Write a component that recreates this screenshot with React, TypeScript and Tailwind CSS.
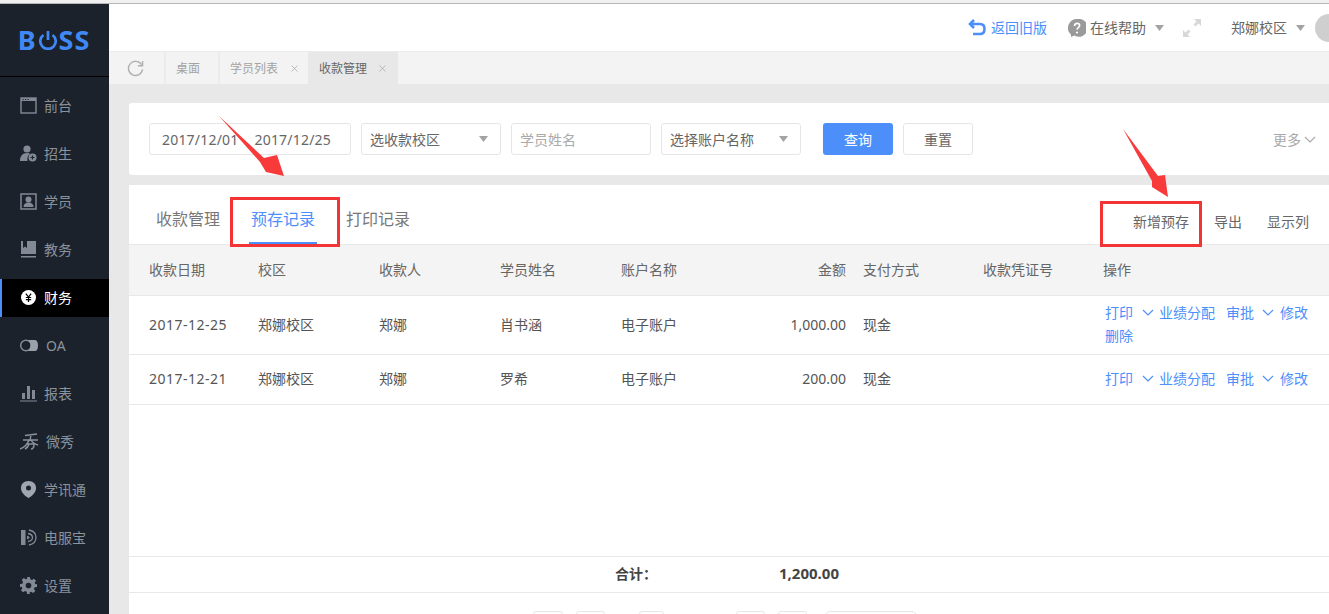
import React from 'react';
import { X } from 'lucide-react';

const Caret = () => (
  <svg width="9" height="6" viewBox="0 0 9 6" className="shrink-0">
    <path d="M0 0h9L4.500 6z" fill="#a3a3a3" />
  </svg>
);

const Chevron = ({ className }: { className?: string }) => (
  <svg viewBox="0 0 12 7" className={`w-[12px] h-[7px] shrink-0 ${className ?? ''}`} fill="none" stroke="currentColor" strokeWidth="1.200">
    <path d="M1 1l5 5 5-5" />
  </svg>
);

const ic = 'w-[17px] h-[17px] shrink-0';
const col = '#828a96';

const navItems: { label: string; icon: React.ReactNode; gap?: string; active?: boolean }[] = [
  {
    label: '前台',
    icon: (
      <svg viewBox="0 0 17 17" className={ic}>
        <rect x="1" y="1" width="15" height="15" fill="none" stroke={col} strokeWidth="1.400" />
        <path d="M1 1h15v3H1z" fill={col} />
        <path d="M2.500 2h1.200v1H2.500zM5 2h1.200v1H5zM7.500 2h1.200v1H7.500z" fill="#1c222c" />
      </svg>
    ),
  },
  {
    label: '招生',
    icon: (
      <svg viewBox="0 0 17 17" className={ic}>
        <circle cx="7" cy="4" r="3.600" fill={col} />
        <path d="M0 16c0-5 2.500-8 7-8 1.500 0 2.500.3 3 1-2 1-3 3-2.500 7z" fill={col} />
        <circle cx="12.500" cy="12.500" r="4" fill={col} />
        <path d="M10.500 12.500h4M12.500 10.500v4" stroke="#1c222c" strokeWidth="1.100" />
      </svg>
    ),
  },
  {
    label: '学员',
    icon: (
      <svg viewBox="0 0 17 17" className={ic}>
        <rect x="1" y="1" width="15" height="15" fill="none" stroke={col} strokeWidth="1.500" />
        <circle cx="8.500" cy="6.500" r="3" fill={col} />
        <path d="M3.500 14c0-3 2-4.500 5-4.500s5 1.500 5 4.500z" fill={col} />
      </svg>
    ),
  },
  {
    label: '教务',
    icon: (
      <svg viewBox="0 0 17 17" className={ic}>
        <path d="M1 0h15v13H1z" fill={col} />
        <path d="M3 0h4v7L5 5.500 3 7z" fill="#1c222c" />
        <path d="M1 15h15v1.500H1z" fill={col} />
      </svg>
    ),
  },
  {
    label: '财务',
    active: true,
    icon: (
      <svg viewBox="0 0 17 17" className="w-[15px] h-[15px] shrink-0 mx-px">
        <circle cx="8.500" cy="8.500" r="8.500" fill="#fff" />
        <path d="M5.500 4l3 4 3-4M8.500 8v5.500M5.500 8.500h6M5.500 11h6" stroke="#000" strokeWidth="1.400" fill="none" />
      </svg>
    ),
  },
  {
    label: 'OA',
    gap: 'ml-[8px]',
    icon: (
      <svg viewBox="0 0 18 13" className="w-[18px] h-[13px] shrink-0">
        <circle cx="6" cy="6.500" r="5.300" fill="none" stroke={col} strokeWidth="1.500" />
        <path d="M8 1h6.500C17 1 18 3 18 6.500S17 12 15 12H8c1.800-1.500 2.500-3.500 2.500-5.500S9.800 2.500 8 1z" fill="#9aa1ab" />
      </svg>
    ),
  },
  {
    label: '报表',
    icon: (
      <svg viewBox="0 0 17 17" className={ic}>
        <path d="M2 8h3v6H2zM7 1h3v13H7zM12 5h3v9h-3z" fill={col} />
        <path d="M0 15.500h17v1H0z" fill={col} />
      </svg>
    ),
  },
  {
    label: '微秀',
    gap: 'ml-[7px]',
    icon: (
      <svg viewBox="0 0 19 17" className="w-[19px] h-[17px] shrink-0" fill="none" stroke="#8b929c" strokeWidth="1.500">
        <path d="M5 2.500L17 1M3 7h15M11 1L10 8M9 7C8 10 5 14 0 16M11 7c1 2 3 4 7 5M7 11h7c0 3-1 5-3 5M9 11c-.5 2-2 4-4 5" />
      </svg>
    ),
  },
  {
    label: '学讯通',
    icon: (
      <svg viewBox="0 0 17 17" className={ic}>
        <path d="M8.500 0C3.800 0 1 3 1 7c0 4 3 7.500 7.500 10C13 14.500 16 11 16 7c0-4-2.800-7-7.500-7z" fill="#a0a6af" />
        <circle cx="8.500" cy="7" r="2.500" fill="#1c222c" />
      </svg>
    ),
  },
  {
    label: '电服宝',
    icon: (
      <svg viewBox="0 0 17 17" className={ic}>
        <path d="M1 1h4.500v15H1z" fill={col} />
        <path d="M9 1c5 1 7 4 7 7.500S14 15 9 16M8 4.500c3 .5 4.500 2 4.500 4S11 12 8 12.500M7 7.500c1 .2 2 .5 2 1s-1 .8-2 1" stroke={col} strokeWidth="1.300" fill="none" />
      </svg>
    ),
  },
  {
    label: '设置',
    icon: (
      <svg viewBox="0 0 24 24" className={ic}>
        <path
          fill={col}
          fillRule="evenodd"
          d="M10 0h4l.6 3.300 2.300 1 2.800-1.900 2.900 2.900-1.900 2.800 1 2.300L24 10v4l-3.300.6-1 2.300 1.900 2.800-2.900 2.900-2.800-1.900-2.300 1L14 24h-4l-.6-3.300-2.300-1-2.800 1.900-2.900-2.900 1.900-2.800-1-2.300L0 14v-4l3.300-.6 1-2.300-1.900-2.800 2.900-2.900 2.800 1.900 2.300-1zM12 8a4 4 0 100 8 4 4 0 000-8z"
        />
      </svg>
    ),
  },
];

const grid = 'grid grid-cols-[109px_121px_121px_121px_121px_104px_17px_120px_122px_1fr] pl-5';

const Actions = () => (
  <div className="flex items-center text-[#4c8ffb] text-[14px] leading-[19px]">
    <span>打印</span>
    <Chevron className="ml-[9px] mr-[5px]" />
    <span>业绩分配</span>
    <span className="ml-[11px]">审批</span>
    <Chevron className="ml-[8px] mr-[6px]" />
    <span>修改</span>
  </div>
);

const rows = [
  { date: '2017-12-25', name: '肖书涵', amount: '1,000.00', h: 'h-[59px] pb-[2px]', extra: true },
  { date: '2017-12-21', name: '罗希', amount: '200.00', h: 'h-[50px] pb-[2px]', extra: false },
];

const App: React.FC = () => {
  return (
    <div
      className="relative h-screen w-full overflow-hidden bg-[#e8e8e8] text-[14px] text-[#555]"
      style={{ fontFamily: '"Noto Sans", "Noto Sans CJK SC", sans-serif' }}
    >
      <div className="h-[4px] bg-[#f0f0f0] border-b border-[#b5b5b5]" />
      <div className="flex h-[610px]">
        {/* Sidebar */}
        <aside className="w-[109px] shrink-0 bg-[#1c222c] flex flex-col">
          <div className="h-[73px] shrink-0 border-b border-black flex items-center justify-center text-[#3f88f5]">
            <div className="flex items-center font-bold text-[27px] tracking-[1px] leading-none -mt-[1px] -ml-[1px]">
              <span>B</span>
              <svg viewBox="0 0 22 22" className="w-[20px] h-[20px] mx-[1px]" fill="none" stroke="#3f88f5" strokeWidth="3">
                <path d="M6 5.500a8.500 8.500 0 1010 0M11 1v10" />
              </svg>
              <span>SS</span>
            </div>
          </div>
          <nav className="flex flex-col gap-[10px] pt-[10px]">
            {navItems.map((item) => (
              <div
                key={item.label}
                className={`h-[38px] pb-[2px] flex items-center ${
                  item.active ? 'bg-black text-white border-l-2 border-[#4c8ffb] pl-[18px]' : 'pl-[20px] text-[#8b929c]'
                }`}
              >
                {item.icon}
                <span className={`${item.gap ?? 'ml-[7px]'} text-[14px]`}>{item.label}</span>
              </div>
            ))}
          </nav>
        </aside>

        <main className="flex-1 min-w-0 flex flex-col">
          {/* Top bar */}
          <header className="h-[48px] shrink-0 bg-white border-b border-[#ececec] flex items-center pl-[859px] text-[14px] whitespace-nowrap">
            <svg viewBox="0 0 18 18" className="w-[18px] h-[18px] shrink-0" fill="none" stroke="#4c8ffb" strokeWidth="2.600">
              <path d="M6 1L2 5l4 4M2 5h10c3 0 4.500 2 4.500 5s-1.500 5-4.500 5H5" />
            </svg>
            <span className="ml-[5px] text-[#4c8ffb]">返回旧版</span>
            <svg viewBox="0 0 18 18" className="w-[18px] h-[18px] shrink-0 ml-[21px]">
              <path d="M9 0a9 9 0 00-6 15.700V18l3.200-1.400A9 9 0 109 0z" fill="#9a9a9a" />
              <path d="M6.500 7c0-1.700 1-2.700 2.600-2.700s2.500 1 2.500 2.300c0 2-2.500 2-2.500 4" stroke="#fff" strokeWidth="1.700" fill="none" />
              <circle cx="9" cy="13.500" r="1.100" fill="#fff" />
            </svg>
            <span className="ml-[4px] text-[#666]">在线帮助</span>
            <span className="ml-[9px]"><Caret /></span>
            <svg viewBox="0 0 18 18" className="w-[18px] h-[18px] shrink-0 ml-[19px]" fill="#d8d8d8">
              <path d="M11 0h7v7l-2.500-2.500-3 3-2-2 3-3zM0 18v-7l2.500 2.500 3-3 2 2-3 3L7 18z" />
            </svg>
            <span className="ml-[30px] text-[#666]">郑娜校区</span>
            <span className="ml-[9px]"><Caret /></span>
            <div className="ml-[10px] w-[28px] h-[28px] rounded-full bg-[#cfcfcf] shrink-0 overflow-hidden flex justify-center">
              <div className="w-[7px] h-[28px] bg-[#adadad] rounded-full ml-[8px]" />
            </div>
          </header>

          {/* Tab strip */}
          <div className="h-[32px] shrink-0 bg-[#f3f3f3] flex items-center text-[12px] text-[#a3a3a3]">
            <div className="w-[57px] h-full flex items-center justify-center border-r-2 border-[#ebebeb]">
              <svg viewBox="0 0 18 18" className="w-[17px] h-[17px] -ml-[2px]" fill="none" stroke="#b0b0b0" strokeWidth="1.500">
                <path d="M15.500 5A7.500 7.500 0 1016.500 10" />
                <path d="M16.500 1v5h-5" />
              </svg>
            </div>
            <div className="w-[54px] h-full flex items-center pl-[10px] pt-px border-r-2 border-[#ebebeb]">桌面</div>
            <div className="w-[88px] h-full flex items-center pl-[10px] pt-px">
              学员列表
              <X className="w-[11px] h-[11px] ml-[11px]" strokeWidth={1.500} />
            </div>
            <div className="w-[90px] h-full flex items-center pl-[11px] pt-px bg-[#e8e8e8] text-[#666]">
              收款管理
              <X className="w-[11px] h-[11px] ml-[10px] text-[#a3a3a3]" strokeWidth={1.500} />
            </div>
          </div>

          <div className="pl-[20px] pt-[19px] w-[1220px] flex flex-col gap-[10px] flex-1 min-h-0">
            {/* Filters */}
            <section className="h-[72px] shrink-0 bg-white rounded-l-[3px] flex items-center pl-[20px] whitespace-nowrap">
              <div className="w-[202px] h-[32px] border border-[#e6e6e6] rounded-[3px] flex items-center pl-[12px] text-[#666] tracking-[0.2px]">
                <span>2017/12/01</span>
                <span className="ml-[16px]">2017/12/25</span>
              </div>
              <div className="ml-[10px] w-[140px] h-[32px] border border-[#e6e6e6] rounded-[3px] flex items-center justify-between pl-[8px] pr-[12px] text-[#666]">
                选收款校区
                <Caret />
              </div>
              <div className="ml-[10px] w-[140px] h-[32px] border border-[#e6e6e6] rounded-[3px] flex items-center pl-[8px] text-[#aaa]">
                学员姓名
              </div>
              <div className="ml-[10px] w-[140px] h-[32px] border border-[#e6e6e6] rounded-[3px] flex items-center justify-between pl-[8px] pr-[12px] text-[#666]">
                选择账户名称
                <Caret />
              </div>
              <button className="ml-[22px] w-[70px] h-[32px] rounded-[3px] bg-[#4c8ffb] text-white">查询</button>
              <button className="ml-[10px] w-[70px] h-[32px] rounded-[3px] border border-[#e6e6e6] text-[#666]">重置</button>
              <div className="ml-[300px] flex items-center text-[14px] text-[#aaa]">
                更多
                <Chevron className="ml-[3px] w-[11px]" />
              </div>
            </section>

            {/* Records */}
            <section className="flex-1 min-h-0 bg-white flex flex-col">
              <div className="h-[60px] shrink-0 border-b border-[#e8e8e8] flex items-stretch relative whitespace-nowrap">
                <div className="flex text-[16px] text-[#777] pl-[27px] gap-[31px]">
                  <span className="pt-[22px]">收款管理</span>
                  <span className="pt-[22px] text-[#4c8ffb] relative">
                    预存记录
                    <span className="absolute -left-[2px] -right-[2px] bottom-0 h-[2px] bg-[#4c8ffb]" />
                  </span>
                  <span className="pt-[22px]">打印记录</span>
                </div>
                <div className="ml-auto flex items-center gap-[25px] pr-[20px] text-[14px] text-[#666] pt-[14px]">
                  <span>新增预存</span>
                  <span>导出</span>
                  <span>显示列</span>
                </div>
              </div>

              <div className={`${grid} h-[51px] pb-[2px] shrink-0 bg-[#f4f4f4] border-b border-[#e8e8e8] items-center text-[14px] text-[#666] whitespace-nowrap`}>
                <span>收款日期</span>
                <span>校区</span>
                <span>收款人</span>
                <span>学员姓名</span>
                <span>账户名称</span>
                <span className="text-right">金额</span>
                <span />
                <span>支付方式</span>
                <span>收款凭证号</span>
                <span className="-ml-[2px]">操作</span>
              </div>

              {rows.map((r) => (
                <div key={r.date} className={`${grid} ${r.h} shrink-0 border-b border-[#e8e8e8] items-center text-[14px] text-[#555] whitespace-nowrap`}>
                  <span className="tracking-[0.5px]">{r.date}</span>
                  <span>郑娜校区</span>
                  <span>郑娜</span>
                  <span>{r.name}</span>
                  <span>电子账户</span>
                  <span className="text-right">{r.amount}</span>
                  <span />
                  <span>现金</span>
                  <span />
                  <div className="flex flex-col gap-[4px]">
                    <Actions />
                    {r.extra && <span className="text-[#4c8ffb] leading-[19px]">删除</span>}
                  </div>
                </div>
              ))}

              <div className="h-[151px] shrink-0" />

              <div className="h-[37px] shrink-0 border-y border-[#e8e8e8] flex items-center font-bold text-[#444] text-[14px] whitespace-nowrap pb-[2px]">
                <span className="ml-[486px] w-[42px]">合计：</span>
                <span className="ml-[122px] text-[15px]">1,200.00</span>
              </div>

              <div className="flex pt-[18px] pl-[404px]">
                <div className="w-[30px] h-[30px] border border-[#e6e6e6] rounded-[3px]" />
                <div className="ml-[13px] w-[29px] h-[30px] border border-[#e6e6e6] rounded-[3px]" />
                <div className="ml-[34px] w-[25px] h-[30px] border border-[#e6e6e6] rounded-[3px]" />
                <div className="ml-[72px] w-[29px] h-[30px] border border-[#e6e6e6] rounded-[3px]" />
                <div className="ml-[13px] w-[29px] h-[30px] border border-[#e6e6e6] rounded-[3px]" />
                <div className="ml-[18px] w-[92px] h-[30px] border border-[#e6e6e6] rounded-[5px]" />
              </div>
            </section>
          </div>
        </main>
      </div>

      {/* Red annotations drawn over the page */}
      <div className="absolute left-[230px] top-[197px] w-[110px] h-[50px] border-[3px] border-[#f33434]" />
      <div className="absolute left-[1100px] top-[201px] w-[102px] h-[46px] border-[3px] border-[#f33434]" />
      <svg className="absolute inset-0 w-full h-full pointer-events-none" viewBox="0 0 1329 614">
        <path d="M219 116L264 158 277 155 284 176 266 172 260 162z" fill="#f83a3a" />
        <path d="M1123 129L1158 176 1165 175 1168 197 1152 187 1152 181z" fill="#f83a3a" />
      </svg>
    </div>
  );
};

export default App;
